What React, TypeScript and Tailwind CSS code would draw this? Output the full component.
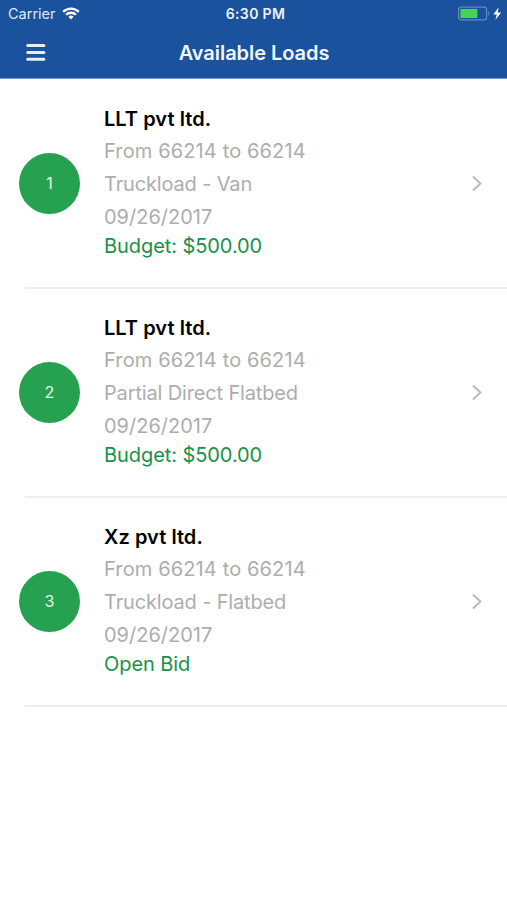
import React from 'react';

interface Load {
  id: number;
  company: string;
  route: string;
  type: string;
  date: string;
  price: string;
}

const LOADS: Load[] = [
  { id: 1, company: 'LLT pvt ltd.', route: 'From 66214 to 66214', type: 'Truckload - Van', date: '09/26/2017', price: 'Budget: $500.00' },
  { id: 2, company: 'LLT pvt ltd.', route: 'From 66214 to 66214', type: 'Partial Direct Flatbed', date: '09/26/2017', price: 'Budget: $500.00' },
  { id: 3, company: 'Xz pvt ltd.', route: 'From 66214 to 66214', type: 'Truckload - Flatbed', date: '09/26/2017', price: 'Open Bid' },
];

const WifiIcon: React.FC = () => (
  <svg width="18" height="13" viewBox="0 0 18 13" fill="none" stroke="white" strokeWidth="2.3">
    <path d="M1.2 4.9a11 11 0 0 1 15.6 0" />
    <path d="M4.1 7.8a6.9 6.9 0 0 1 9.8 0" />
    <path d="M9 12.4 6.4 9.8a3.7 3.7 0 0 1 5.2 0Z" fill="white" stroke="none" />
  </svg>
);

const BatteryIcon: React.FC = () => (
  <svg width="45" height="16" viewBox="0 0 45 16" fill="none">
    <rect x="0.6" y="1.1" width="28" height="12.8" rx="2.6" stroke="#6389c4" strokeWidth="1.2" />
    <rect x="2.4" y="3" width="17" height="9" rx="0.8" fill="#45d64e" />
    <path d="M30.4 5.5c1.4.6 1.4 3.6 0 4.2Z" fill="#7095cd" />
    <path d="M40.6 1.2 35.4 8.4h3.4l-1.4 5.6 5.7-7.6h-3.4Z" fill="white" />
  </svg>
);

const Header: React.FC = () => (
  <header className="h-[79px] bg-[#1a529e] border-b border-[#6f9bd2] text-white">
    <div className="grid grid-cols-3 items-center h-[27px] pl-2 pr-1">
      <div className="flex items-center gap-[6px]">
        <span className="text-[14.5px] text-[#dfe9f7]">Carrier</span>
        <WifiIcon />
      </div>
      <span className="text-center text-[14px] font-semibold tracking-[0.35px] text-[#edf3fb]">6:30 PM</span>
      <div className="flex justify-end">
        <BatteryIcon />
      </div>
    </div>
    <div className="grid grid-cols-[81px_1fr_80px] items-center h-[51px]">
      <button className="pl-[26px]" aria-label="Menu">
        <svg width="20" height="18" viewBox="0 0 20 18" stroke="#e6eefa" strokeWidth="3" strokeLinecap="round">
          <path d="M1.7 1.6h16.2M1.7 8.4h16.2M1.7 15.2h16.2" />
        </svg>
      </button>
      <h1 className="text-center text-[20px] leading-6 font-semibold tracking-[-0.05px] text-[#f3f7fd]">Available Loads</h1>
    </div>
  </header>
);

const LoadRow: React.FC<{ load: Load }> = ({ load }) => (
  <li className="h-[209px]">
    <div className="flex items-center h-[208px] pl-[19px] pr-6">
      <div className="flex items-center justify-center shrink-0 w-[61px] h-[61px] rounded-full bg-[#25a150] text-[16px] text-[#e6f6ea]">
        {load.id}
      </div>
      <div className="flex-1 ml-6 pb-1 text-[20px] text-[#adadad]">
        <p className="leading-[31px] font-semibold tracking-[0.05px] text-black">{load.company}</p>
        <p className="leading-[33px] tracking-[0.13px]">{load.route}</p>
        <p className="leading-[33px] tracking-[-0.15px]">{load.type}</p>
        <p className="leading-[33px]">{load.date}</p>
        <p className="leading-[25px] tracking-[-0.07px] text-[#17924a]">{load.price}</p>
      </div>
      <svg width="12" height="18" viewBox="0 0 12 18" fill="none" stroke="#b9b9b9" strokeWidth="2">
        <path d="M2 2.4l7.4 7L2 16.4" />
      </svg>
    </div>
    <div className="ml-[25px] h-0.5 bg-[#eeeeef]" />
  </li>
);

const App: React.FC = () => {
  return (
    <div className="min-h-screen bg-white font-['Inter',sans-serif]">
      <Header />
      <ul>
        {LOADS.map(load => (
          <LoadRow key={load.id} load={load} />
        ))}
      </ul>
    </div>
  );
};

export default App;
